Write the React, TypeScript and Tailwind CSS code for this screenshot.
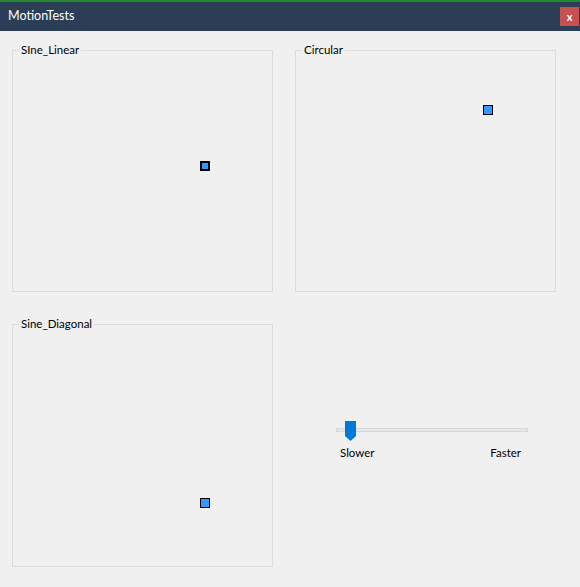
const GroupBox = ({ title, children }: { title: string; children?: React.ReactNode }) => (
  <div className="relative h-full border border-[#dcdcdc]">
    <span className="absolute -top-[9px] left-[6px] bg-[#f0f0f0] px-[2px] leading-[16px] text-black">
      {title}
    </span>
    {children}
  </div>
);

const Dot = ({ x, y, thick }: { x: number; y: number; thick?: boolean }) => (
  <div
    className={`absolute h-[10px] w-[10px] bg-[#3399ff] border-black ${thick ? 'border-2' : 'border'}`}
    style={{ left: x, top: y }}
  />
);

const App = () => {
  return (
    <div className="flex h-[587px] w-[580px] flex-col bg-[#f0f0f0] font-['Lato',sans-serif] text-[11.5px]">
      <div className="h-[2px] bg-[#1f8a2e]" />
      <div className="flex h-[29px] items-center justify-between bg-[#2b3e55] pl-[8px] pr-[1px]">
        <span className="text-[12.5px] text-white">MotionTests</span>
        <button className="flex h-[19px] w-[19px] items-center justify-center bg-[#c75050] text-[11px] font-bold leading-none text-white">
          x
        </button>
      </div>
      <div className="grid grid-cols-[261px_261px] grid-rows-[242px_243px] gap-x-[22px] gap-y-[32px] pl-[12px] pt-[19px]">
        <GroupBox title="SIne_Linear">
          <Dot x={187} y={110} thick />
        </GroupBox>
        <GroupBox title="Circular">
          <Dot x={187} y={54} />
        </GroupBox>
        <GroupBox title="Sine_Diagonal">
          <Dot x={187} y={173} />
        </GroupBox>
        <div className="flex flex-col items-start pl-[41px] pt-[97px]">
          <div className="relative w-[192px]">
            <div className="mt-[7px] h-[4px] border border-[#d6d6d6] bg-[#e7e7e7]" />
            <svg className="absolute left-[9px] top-0" width="11" height="20" viewBox="0 0 11 20">
              <path d="M0 0H11V15L5.5 20L0 15Z" fill="#0078d7" />
            </svg>
            <div className="mt-[12px] flex justify-between pl-[4px] pr-[7px] text-black">
              <span>Slower</span>
              <span>Faster</span>
            </div>
          </div>
        </div>
      </div>
    </div>
  );
};

export default App;
